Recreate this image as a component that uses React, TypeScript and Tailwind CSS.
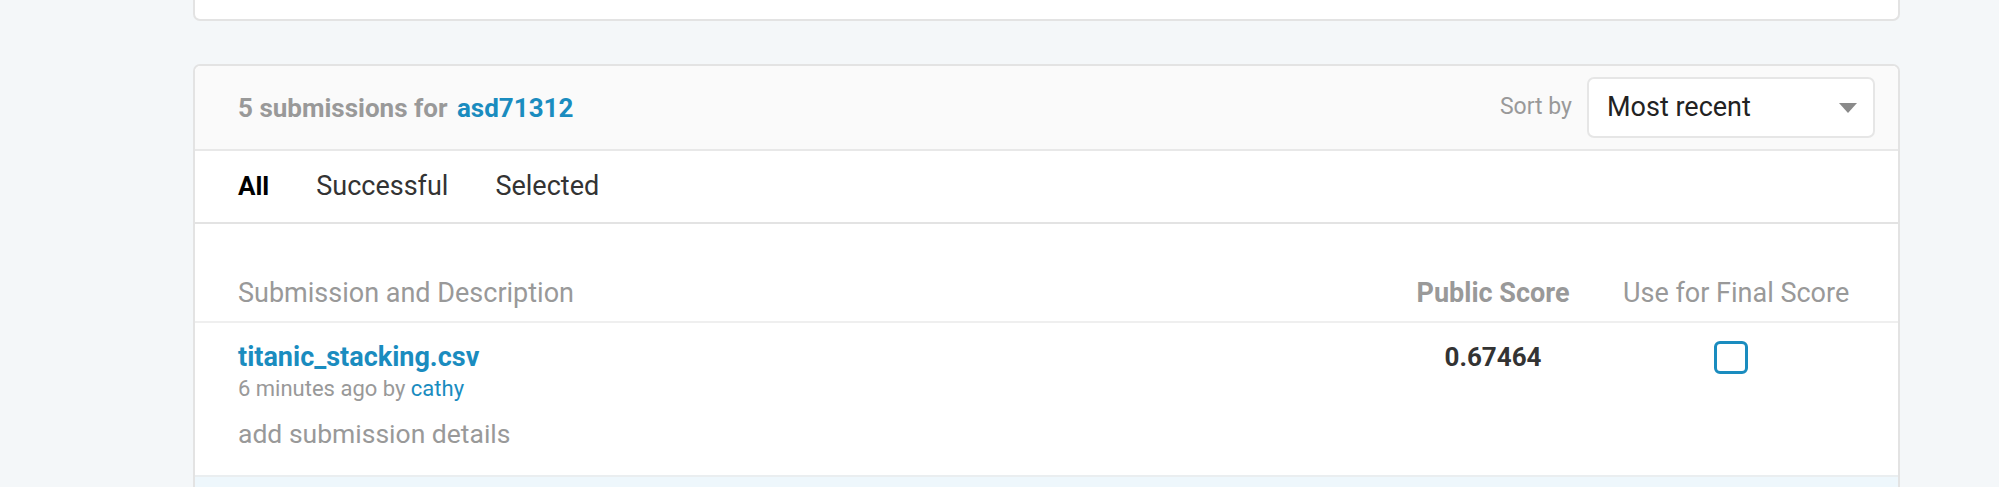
import React from 'react';

const font = { fontFamily: 'Roboto, "Liberation Sans", sans-serif' };

const SubmissionsPage: React.FC = () => {
  return (
    <div className="h-[487px] overflow-hidden bg-[#f4f7f9]" style={font}>
      <div className="ml-[193px] w-[1707px]">
        {/* Previous card (cut off at top) */}
        <div className="h-[21px] bg-white border-2 border-t-0 border-[#e3e3e3] rounded-b-[7px]" />

        {/* Submissions card */}
        <div className="mt-[43px] bg-white border-2 border-[#e3e3e3] rounded-t-[7px]">
          {/* Header */}
          <div className="h-[85px] bg-[#fafafa] rounded-t-[6px] border-b-2 border-[#e8e8e8] flex items-center justify-between pl-[43px] pr-[23px]">
            <div className="text-[26px] font-bold leading-8 text-[#999]">
              5 submissions for <a className="ml-[3px] text-[#1a8cbf]">asd71312</a>
            </div>
            <div className="flex items-center gap-[15px]">
              <span className="text-[23px] text-[#999]">Sort by</span>
              <div className="w-[288px] h-[61px] bg-white border-2 border-[#e6e6e6] rounded-[7px] flex items-center justify-between pl-[18px] pr-[16px]">
                <span className="text-[27px] text-[#222]">Most recent</span>
                <svg width="18" height="10" viewBox="0 0 18 10">
                  <path d="M0 0h18L9 10z" fill="#8a8a8a" />
                </svg>
              </div>
            </div>
          </div>

          {/* Tabs */}
          <div className="h-[73px] border-b-2 border-[#e3e3e3] flex items-center gap-[47px] pl-[43px] text-[27px]">
            <span className="font-bold text-[26px] text-black">All</span>
            <span className="text-[#333]">Successful</span>
            <span className="text-[#333]">Selected</span>
          </div>

          {/* Column headings */}
          <div className="grid grid-cols-[1fr_154px_226px] gap-x-[53px] pl-[43px] pr-[49px] pt-[53px] pb-[12px] border-b-2 border-[#efefef] text-[27px] leading-8 text-[#999]">
            <span>Submission and Description</span>
            <span className="font-bold text-center whitespace-nowrap">Public Score</span>
            <span className="text-center whitespace-nowrap">Use for Final Score</span>
          </div>

          {/* Row */}
          <div className="grid grid-cols-[1fr_154px_226px] gap-x-[53px] pl-[43px] pr-[49px] pt-[18px] pb-[25px] border-b-2 border-[#eaeef0]">
            <div>
              <a className="block text-[27px] leading-8 font-bold text-[#1a8cbf]">titanic_stacking.csv</a>
              <div className="mt-[2px] text-[22px] leading-7 text-[#999]">
                6 minutes ago by <a className="text-[#1a8cbf]">cathy</a>
              </div>
              <div className="mt-[15px] text-[26.5px] leading-8 text-[#999]">add submission details</div>
            </div>
            <div className="text-center text-[26px] leading-8 font-bold text-[#333]">0.67464</div>
            <div className="flex justify-center pr-[10px]">
              <div className="w-[34px] h-[33px] border-[3px] border-[#1a8cbf] rounded-[6px]" />
            </div>
          </div>

          {/* Next row (cut off) */}
          <div className="h-[60px] bg-[#eef7fc]" />
        </div>
      </div>
    </div>
  );
};

export default function App() {
  return <SubmissionsPage />;
}
